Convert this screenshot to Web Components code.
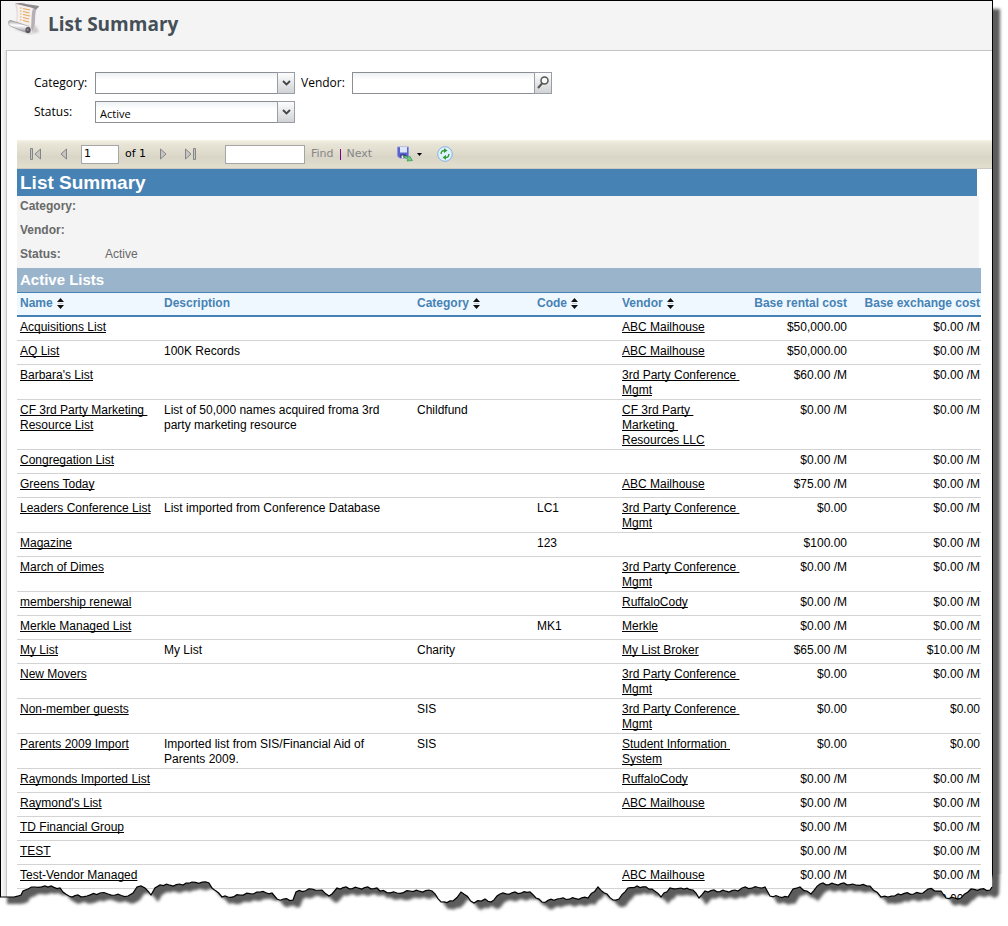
<!DOCTYPE html>
<html lang="en">
<head>
<meta charset="utf-8">
<title>List Summary</title>
<style>
body { margin: 0; background: #fff; color: #000; font: 12px/15px "Liberation Sans", Arial, sans-serif; }
</style>
</head>
<body>
<list-page></list-page>

<template id="t-page">
<style>
:host { display: block; position: relative; overflow: hidden; }
.frame { margin-right: 15px; border: 1px solid #000; border-bottom: 0; background: linear-gradient(90deg, #fafafa, #e6e6e6 5px, #f4f4f4 6px); box-shadow: 7px 9px 3px #5c5c5c; }
.panel { margin-left: 5px; border: 1px solid #c4c4c4; border-width: 1px 0 0 1px; background: #fff; padding-bottom: 13px; }
torn-edge { position: absolute; left: 0; right: 0; bottom: 0; }
</style>
<div class="frame">
  <page-header>List Summary</page-header>
  <main class="panel">
    <filter-form></filter-form>
    <report-toolbar></report-toolbar>
    <report-view></report-view>
  </main>
</div>
<torn-edge></torn-edge>
</template>

<template id="t-header">
<style>
:host { display: flex; align-items: flex-start; gap: 8px; height: 49px; padding-left: 7px; background: #f4f4f4; }
svg { display: block; margin-top: 1px; }
h1 { margin: 10px 0 0; font: bold 19px/26px "Noto Sans", "Open Sans", sans-serif; font-family: "Open Sans", "Noto Sans", sans-serif; color: #454f57; }
</style>
<svg width="32" height="34" viewBox="0 0 32 34" aria-hidden="true">
  <defs>
    <linearGradient id="paper" x1="0" x2="1"><stop offset="0" stop-color="#d5d0d2"/><stop offset=".3" stop-color="#f8f3f0"/><stop offset=".7" stop-color="#efe9e8"/><stop offset="1" stop-color="#aaa6ac"/></linearGradient>
    <linearGradient id="roll" x1=".1" y1="0" x2="0" y2="1"><stop offset="0" stop-color="#a7a3a9"/><stop offset=".35" stop-color="#fff"/><stop offset=".7" stop-color="#bcb8bf"/><stop offset="1" stop-color="#77727b"/></linearGradient>
    <filter id="haze"><feGaussianBlur stdDeviation="1"/></filter>
  </defs>
  <path d="M6 27 22 32 31 30 28 24Z" fill="#aaa" opacity=".6" filter="url(#haze)"/>
  <path d="M7 1.500C11 1 14 1 17 2L31 4.500C28 6 27 9 27 14C27 20 28 26 24 31L8 22C9 14 9 7 7 1.500Z" fill="url(#paper)"/>
  <path d="M7 1.500C11 .5 15 1 18 2L31 4C31 5.500 29 6 28 8C26 6 22 5 18 4.500Z" fill="#8f8b91"/>
  <path d="M8.500 2.500 17 4.500 25 6.500C23.500 9 23.500 14 23.500 23L9 19.500C10.500 13 10 7 8.500 2.500Z" fill="#f6efeb"/>
  <path d="M28 8C26.500 14 28 24 24 30L23 25C24 19 23 12 25 7Z" fill="#b5b0b6"/>
  <g stroke="#e3aa60" stroke-width="1.100" fill="none"><path d="M12 6h1.500M15 6.500 22 8M12 9h1.500M15 9.500 21.500 11M12 12h1.500M15 12.500 22 14M12 15h1.500M15 15.500 21 17M12 18h1.500M15 18.500 21 20"/></g>
  <path d="M1 19C2.500 18 4 19 6 19.500L20 24C23 25 23 31 20 31L3 24.500C1 24 0 21 1 19Z" fill="url(#roll)" stroke="#8b878f" stroke-width=".6"/>
  <ellipse cx="20" cy="28" rx="2.600" ry="3" fill="#57525b"/><ellipse cx="19.600" cy="27.700" rx="1" ry="1.300" fill="#8e8991"/>
</svg>
<h1><slot></slot></h1>
</template>

<template id="t-filter">
<style>
:host { display: block; padding: 21px 0 17px 27px; font: 12px/22px "Open Sans", "Noto Sans", sans-serif; }
form { display: grid; grid-template-columns: 61px 200px 57px 200px; row-gap: 7px; }
label.second { padding-left: 6px; }
.pick { display: grid; grid-template-columns: 1fr 18px; height: 22px; box-sizing: border-box; }
select, input { box-sizing: border-box; min-width: 0; height: 22px; margin: 0; border: 1px solid #8c8e94; border-radius: 0; background: linear-gradient(#eef1f3, #fff 7px); font: 11px/20px "Open Sans", "Noto Sans", sans-serif; color: #000; outline: 0; }
select { appearance: none; grid-area: 1 / 1 / 2 / 3; padding: 2px 20px 0 4px; }
input { padding: 0 4px; border-right: 0; }
.drop { grid-area: 1 / 2; box-sizing: border-box; width: 18px; height: 22px; border: 1px solid #9a9ca8; background: linear-gradient(#fdfdfd, #d0d2d4); display: grid; justify-content: center; align-content: start; pointer-events: none; padding: 7px 0 0; }
button.drop { pointer-events: auto; padding: 3px 0 0; }
</style>
<form>
  <label for="category">Category:</label>
  <div class="pick"><select id="category"><option></option></select><span class="drop"><svg width="9" height="6" viewBox="0 0 9 6"><path d="M1 1 4.500 4.500 8 1" fill="none" stroke="#444" stroke-width="1.800"/></svg></span></div>
  <label class="second" for="vendor">Vendor:</label>
  <div class="pick"><input id="vendor" type="text"><button class="drop" type="button" aria-label="Search vendors"><svg width="12" height="13" viewBox="0 0 12 13"><circle cx="7.500" cy="4.500" r="3.500" fill="#fafafa" stroke="#555" stroke-width="1.500"/><path d="M5 7.500 1 12" stroke="#555" stroke-width="2"/></svg></button></div>
  <label for="status">Status:</label>
  <div class="pick"><select id="status"><option>Active</option></select><span class="drop"><svg width="9" height="6" viewBox="0 0 9 6"><path d="M1 1 4.500 4.500 8 1" fill="none" stroke="#444" stroke-width="1.800"/></svg></span></div>
</form>
</template>

<template id="t-toolbar">
<style>
:host { display: flex; align-items: center; box-sizing: border-box; height: 29px; margin-left: 10px; padding-left: 12px; border-bottom: 1px solid #c9c8c2; background: linear-gradient(#f5f2e6, #e8e5d7 4px, #e2dfd0 10px, #d9d5c7 17px, #e2dece 27px); font: 11px/20px "DejaVu Sans", Verdana, sans-serif; }
button { display: block; border: 0; padding: 0; background: none; font: inherit; color: #868686; }
svg { display: block; }
input { box-sizing: border-box; height: 19px; margin: 0; padding: 0 2px; border: 1px solid #a5a5a5; border-radius: 0; background: #fff; font: inherit; outline: 0; }
.group { display: flex; align-items: center; }
.back { gap: 19px; margin-right: 14px; }
.page { gap: 6px; margin-right: 13px; }
.page input { width: 38px; }
.page label { width: 22px; white-space: nowrap; }
.ahead { gap: 17px; margin-right: 28px; }
.find { gap: 6px; margin-right: 24px; }
.find input { width: 80px; }
.bar { width: 1px; height: 11px; background: #800080; }
.save { gap: 4px; display: flex; align-items: center; margin-right: 15px; }
</style>
<div class="group back">
  <button type="button" aria-label="First page"><svg width="12" height="12" viewBox="0 0 12 12" fill="#c6c6c3" stroke="#858585"><path d="M1.500.5h2v11h-2zM11.500 1v10L6 6z"/></svg></button>
  <button type="button" aria-label="Previous page"><svg width="7" height="12" viewBox="0 0 7 12" fill="#c6c6c3" stroke="#858585"><path d="M6.500 1v10L1 6z"/></svg></button>
</div>
<div class="group page"><input id="page" type="text" value="1"><label for="page">of 1</label></div>
<div class="group ahead">
  <button type="button" aria-label="Next page"><svg width="7" height="12" viewBox="0 0 7 12" fill="#c6c6c3" stroke="#858585"><path d="M.5 1v10L6 6z"/></svg></button>
  <button type="button" aria-label="Last page"><svg width="13" height="12" viewBox="0 0 13 12" fill="#c6c6c3" stroke="#858585"><path d="M9.500.5h2v11h-2zM1.500 1v10L7 6z"/></svg></button>
</div>
<div class="group find"><input type="text" aria-label="Find text"><button type="button">Find</button><span class="bar"></span><button type="button">Next</button></div>
<button type="button" class="save" aria-label="Export">
  <svg width="17" height="17" viewBox="0 0 17 17"><path d="M1.500 1h11v11H3.500L1.500 10z" fill="#5a62cc" stroke="#8a92de" stroke-width=".8"/><path d="M4 1h7v5.500H4z" fill="#dbe8fb"/><path d="M4.500 8.500h5.500V12H4.500z" fill="#2b2f70"/><path d="M5.500 9.500h2V12h-2z" fill="#eef"/><path d="M7.500 10.500C9 9.500 10.500 10 12 11.500L13.500 10 16.500 14.500 11 15 12 13.500C10.500 12.500 9 12 7.500 10.500Z" fill="#74cb82" stroke="#3d9b50" stroke-width=".8"/></svg>
  <svg width="5" height="3" viewBox="0 0 5 3"><path d="M0 0h5L2.500 3z" fill="#000"/></svg>
</button>
<button type="button" aria-label="Refresh"><svg width="16" height="16" viewBox="0 0 16 16"><circle cx="8" cy="8" r="7.300" fill="#e0f0fd" stroke="#84b4e2"/><g fill="none" stroke="#2f9a2f" stroke-width="1.400"><path d="M4.200 8C4 5.500 5.500 4.500 7.500 4.500"/><path d="M11.800 8C12 10.500 10.500 11.500 8.500 11.500"/></g><path d="M7 2.200 10.500 4.600 7 7zM9 9 5.500 11.400 9 13.800z" fill="#2f9a2f"/></svg></button>
</template>

<template id="t-sort">
<style>:host { display: inline-block; margin-left: 4px; vertical-align: -2px; } svg { display: block; }</style>
<svg width="7" height="11" viewBox="0 0 7 11"><path d="M0 4 3.500 0 7 4zM0 7h7L3.500 11z" fill="#111"/><path d="M1 5.500h5" stroke="#ccc"/></svg>
</template>

<template id="t-report">
<style>
:host { display: block; margin: 0 11px 0 10px; }
h2 { margin: 0 4px 0 0; padding: 0 3px; background: #4682b4; color: #fff; font-size: 19px; line-height: 27px; }
dl { display: grid; grid-template-columns: 85px 1fr; grid-auto-rows: 24px; margin: 0 2px 0 0; padding: 0 3px; background: #f4f4f4; color: #696969; line-height: 20px; }
dt { font-weight: bold; }
dd { margin: 0; }
h3 { margin: 0; padding: 0 3px; background: #9ab4cb; color: #fff; font-size: 15px; line-height: 24px; }
table { width: 100%; table-layout: fixed; border-collapse: separate; border-spacing: 0; }
.c-name { width: 144px; } .c-cat, .c-vendor { width: 120px; } .c-code { width: 85px; } .c-rent { width: 109px; } .c-exch { width: 133px; }
th, td { box-sizing: border-box; height: 24px; padding: 3px 1px 1px 3px; text-align: left; vertical-align: top; }
th { height: 25px; border-top: 1px solid #4682b4; border-bottom: 2px solid #4682b4; background: #f0f8ff; color: #4682b4; white-space: nowrap; }
td { border-bottom: 1px solid #d3d3d3; }
.num { text-align: right; white-space: nowrap; }
.desc { padding-right: 8px; }
a { color: #000; white-space: pre-wrap; text-decoration-skip-ink: none; text-underline-offset: 1px; }
</style>
<h2>List Summary</h2>
<dl><dt>Category:</dt><dd></dd><dt>Vendor:</dt><dd></dd><dt>Status:</dt><dd>Active</dd></dl>
<h3>Active Lists</h3>
<table>
  <colgroup><col class="c-name"><col><col class="c-cat"><col class="c-code"><col class="c-vendor"><col class="c-rent"><col class="c-exch"></colgroup>
  <thead><tr><th>Name<sort-mark></sort-mark></th><th>Description</th><th>Category<sort-mark></sort-mark></th><th>Code<sort-mark></sort-mark></th><th>Vendor<sort-mark></sort-mark></th><th class="num">Base rental cost</th><th class="num">Base exchange cost</th></tr></thead>
  <tbody></tbody>
</table>
</template>

<template id="t-torn">
<style>:host { display: block; height: 52px; pointer-events: none; } svg { display: block; width: 100%; height: 52px; }</style>
<svg viewBox="0 0 1008 52" preserveAspectRatio="none" aria-hidden="true">
  <defs>
    <clipPath id="below"><path class="below"/></clipPath>
    <filter id="soft" x="-5%" y="-50%" width="110%" height="200%"><feGaussianBlur stdDeviation="1.500"/></filter>
  </defs>
  <path class="below" fill="#fff"/>
  <g clip-path="url(#below)"><path class="sheet" fill="#5c5c5c" transform="translate(7 7)" filter="url(#soft)"/></g>
  <path class="line" fill="none" stroke="#000" stroke-width="1.200"/>
</svg>
</template>

<script>
function define(name, templateId, ready) {
  customElements.define(name, class extends HTMLElement {
    constructor() {
      super();
      this.attachShadow({ mode: "open" }).append(document.getElementById(templateId).content.cloneNode(true));
      if (ready) ready(this.shadowRoot);
    }
  });
}

const M = "$0.00 /M", ABC = "ABC Mailhouse", CONF = "3rd Party Conference \nMgmt";
// name, description, category, code, vendor, rental cost, exchange cost
const rows = [
  ["Acquisitions List", "", "", "", ABC, "$50,000.00", M],
  ["AQ List", "100K Records", "", "", ABC, "$50,000.00", M],
  ["Barbara's List", "", "", "", CONF, "$60.00 /M", M],
  ["CF 3rd Party Marketing \nResource List", "List of 50,000 names acquired froma 3rd party marketing resource", "Childfund", "", "CF 3rd Party \nMarketing \nResources LLC", M, M],
  ["Congregation List", "", "", "", "", M, M],
  ["Greens Today", "", "", "", ABC, "$75.00 /M", M],
  ["Leaders Conference List", "List imported from Conference Database", "", "LC1", CONF, "$0.00", M],
  ["Magazine", "", "", "123", "", "$100.00", M],
  ["March of Dimes", "", "", "", CONF, M, M],
  ["membership renewal", "", "", "", "RuffaloCody", M, M],
  ["Merkle Managed List", "", "", "MK1", "Merkle", M, M],
  ["My List", "My List", "Charity", "", "My List Broker", "$65.00 /M", "$10.00 /M"],
  ["New Movers", "", "", "", CONF, "$0.00", M],
  ["Non-member guests", "", "SIS", "", CONF, "$0.00", "$0.00"],
  ["Parents 2009 Import", "Imported list from SIS/Financial Aid of Parents 2009.", "SIS", "", "Student Information \nSystem", "$0.00", "$0.00"],
  ["Raymonds Imported List", "", "", "", "RuffaloCody", M, M],
  ["Raymond's List", "", "", "", ABC, M, M],
  ["TD Financial Group", "", "", "", "", M, M],
  ["TEST", "", "", "", "", M, M],
  ["Test-Vendor Managed", "", "", "", ABC, M, M],
  ["", "", "", "", "", "", M]
];

define("sort-mark", "t-sort");
define("page-header", "t-header");
define("filter-form", "t-filter");
define("report-toolbar", "t-toolbar");
define("report-view", "t-report", root => {
  const body = root.querySelector("tbody");
  for (const row of rows) {
    const tr = body.insertRow();
    row.forEach((text, i) => {
      const td = tr.insertCell();
      if (i === 1) td.className = "desc";
      if (i > 4) td.className = "num";
      if (text && (i === 0 || i === 4)) {
        const a = document.createElement("a");
        a.href = "#";
        a.textContent = text;
        td.append(a);
      } else td.textContent = text;
    });
  }
});
define("torn-edge", "t-torn", root => {
  const edge = [[0,23],[14,23],[21,21],[23,17],[28,15],[35,13],[45,12],[60,14],[63,18],[69,22],[87,22],[100,19],[108,20],[128,22],[133,19],[137,13],[141,12],[145,14],[151,21],[155,14],[160,11],[183,11],[192,8],[209,9],[212,14],[222,23],[228,23],[240,21],[260,18],[272,19],[277,25],[293,26],[296,18],[312,15],[322,16],[329,22],[332,20],[337,14],[377,14],[380,17],[397,19],[410,17],[432,17],[441,28],[453,27],[461,18],[474,29],[485,25],[491,28],[500,20],[530,18],[542,28],[557,25],[588,24],[598,13],[613,26],[619,25],[628,14],[637,12],[652,15],[661,23],[670,14],[681,14],[693,16],[699,24],[705,17],[738,17],[742,14],[765,13],[770,22],[788,23],[793,15],[800,13],[811,20],[820,10],[853,10],[870,12],[881,23],[888,23],[898,20],[923,19],[928,15],[941,17],[946,24],[961,24],[971,15],[990,16],[992,13]];
  // Break long runs into small uneven teeth so that the tear looks ragged.
  const teeth = [0.6, -0.8, 0.2, 1, -0.4, -1, 0.8];
  const pts = [];
  edge.forEach(([x, y], i) => {
    pts.push([x, y]);
    const next = edge[i + 1];
    if (!next) return;
    const n = Math.floor((next[0] - x) / 3);
    for (let k = 1; k < n && x > 0; k++) {
      const t = k / n;
      pts.push([x + (next[0] - x) * t, y + (next[1] - y) * t + teeth[(i + k) % 7]]);
    }
  });
  const tear = pts.map(p => p.join(" ")).join("L");
  root.querySelectorAll(".below").forEach(p => p.setAttribute("d", `M${tear}L993 0H1008V52H0Z`));
  root.querySelector(".sheet").setAttribute("d", `M0 -20L${tear}L993 -20Z`);
  root.querySelector(".line").setAttribute("d", `M${tear}`);
});
define("list-page", "t-page");
</script>
</body>
</html>
